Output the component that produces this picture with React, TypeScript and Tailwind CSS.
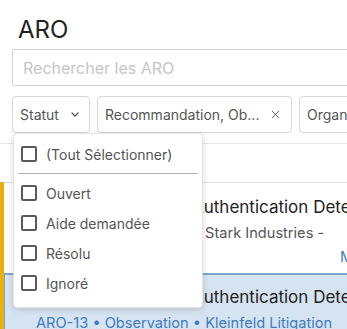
import { X } from "lucide-react";

const statuses = ["Ouvert", "Aide demandée", "Résolu", "Ignoré"];

function Box() {
  return <span className="w-4 h-4 shrink-0 rounded-[2px] border-2 border-[#5a5a5a] bg-white" />;
}

function Chevron() {
  return (
    <svg width="8" height="5" viewBox="0 0 8 5" fill="none" className="shrink-0">
      <path d="M1 1l3 3 3-3" stroke="#555" strokeWidth="1.3" strokeLinecap="round" strokeLinejoin="round" />
    </svg>
  );
}

export default function App() {
  return (
    <div
      className="relative w-[347px] h-[329px] overflow-hidden bg-white text-[#222]"
      style={{ fontFamily: "Inter, 'Noto Sans', sans-serif" }}
    >
      <div className="w-[640px]">
        {/* Header */}
        <h1 className="pl-[18px] pt-[14px] text-[24px] leading-[32px] font-normal">ARO</h1>

        <div className="ml-[12px] mt-[3px] h-[37px] border border-[#d3d3d3] rounded-[2px] flex items-center pl-[10px]">
          <span className="text-[16px] text-[#c6c6c6]">Rechercher les ARO</span>
        </div>

        {/* Filters */}
        <div className="ml-[12px] mt-[10px] flex gap-[7px]">
          <button className="w-[78px] h-[37px] border border-[#d6d6d6] rounded-[4px] flex items-center pl-[7px] gap-[12px] text-[14px] text-[#555]">
            Statut <Chevron />
          </button>
          <button className="w-[195px] h-[37px] border border-[#d6d6d6] rounded-[4px] flex items-center justify-between pl-[7px] pr-[9px] text-[14px] text-[#555]">
            <span>Recommandation, Ob...</span>
            <X size={13} strokeWidth={1.6} className="text-[#444]" />
          </button>
          <button className="w-[160px] h-[37px] border border-[#d6d6d6] rounded-[4px] flex items-center pl-[7px] text-[14px] text-[#555]">
            Organisation
          </button>
        </div>

        <div className="mt-[10px] h-[39px] border-t border-[#e6e6e6]" />

        {/* List */}
        <div className="border-l-4 border-[#e9b10f]">
          <div className="border-t border-[#e0e0e0] pl-[32px] pt-[11px] pb-[5px]">
            <p className="-ml-[14px] text-[17px] leading-[26px] whitespace-nowrap">Possible Brute Force Authentication Detected on Domain Controller</p>
            <p className="text-[14.6px] leading-[26px] text-[#555] whitespace-nowrap">ARO-12 • Observation • Stark Industries -</p>
            <p className="text-[15px] leading-[22px] text-[#3f7bbf] pl-[304px] whitespace-nowrap">Mis à jour il y a 2 jours</p>
          </div>
          <div className="border-t-2 border-l border-[#7ca4cc] bg-[#d6e4f1] pl-[31px] pt-[9px] pb-[6px]">
            <p className="-ml-[14px] text-[17px] leading-[26px] whitespace-nowrap">Possible Brute Force Authentication Detected on VPN Gateway</p>
            <p className="text-[14.6px] leading-[26px] text-[#3f7bbf] whitespace-nowrap">ARO-13 • Observation • Kleinfeld Litigation</p>
          </div>
        </div>
      </div>

      {/* Status dropdown */}
      <div className="absolute left-[13px] top-[133px] w-[190px] h-[175px] bg-white border border-[#e4e4e4] rounded-[4px] shadow-[0_2px_6px_rgba(0,0,0,0.15)] pt-[5px] pb-[10px] text-[14px] text-[#555]">
        <div className="h-[30px] flex items-center gap-[9px] pl-[7px]">
          <Box />
          <span>(Tout Sélectionner)</span>
        </div>
        <div className="mx-[4px] mt-[4px] h-px bg-[#b3b3b3]" />
        <div className="mt-[4px]">
          {statuses.map((s) => (
            <div key={s} className="h-[30px] flex items-center gap-[9px] pl-[7px]">
              <Box />
              <span>{s}</span>
            </div>
          ))}
        </div>
      </div>
    </div>
  );
}
